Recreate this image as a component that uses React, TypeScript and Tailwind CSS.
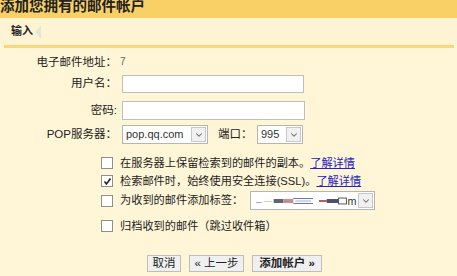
import { ChevronDown } from "lucide-react"

const font = { fontFamily: '"Liberation Sans", "Noto Sans CJK SC", sans-serif' }

function Select(props: any) {
  return (
    <div className={"flex items-center h-[19px] bg-white border border-[#b5b5b5] " + props.className}>
      <div className="flex-1 pl-[3px] text-[11px] text-[#333] leading-none">{props.children}</div>
      <div className="w-[15px] h-[15px] mr-[1px] border border-[#c8c8c8] bg-[#f1f1f1] flex items-center justify-center">
        <ChevronDown size={10} strokeWidth={2.5} className="text-[#666]" />
      </div>
    </div>
  )
}

function Check(props: any) {
  return (
    <div className="flex items-center h-[18px]">
      <div className="w-[12px] h-[12px] border border-[#8f8f8f] bg-white flex items-center justify-center mr-[7px]">
        {props.checked && (
          <svg width="9" height="9" viewBox="0 0 9 9">
            <path d="M1.5 4.5 L3.5 7 L7.5 1.5" stroke="#222" strokeWidth="1.6" fill="none" />
          </svg>
        )}
      </div>
      <span className="text-[11.2px] text-[#222]">{props.children}</span>
    </div>
  )
}

function Btn(props: any) {
  return (
    <div className={"h-[17px] flex items-center justify-center border border-[#bdbdbd] bg-[#f0f0f0] text-[11.5px] text-[#222] " + props.className}>
      {props.children}
    </div>
  )
}

export default function App() {
  return (
    <div style={font} className="w-[457px] h-[276px] bg-[#fff6d8] overflow-hidden">
      <div className="h-[18px] bg-[#f9d066] overflow-hidden">
        <p className="text-[14.5px] font-bold text-[#222] leading-[14px] -mt-[1px]">添加您拥有的邮件帐户</p>
      </div>
      <div className="h-[27px] bg-[#fef4d4] flex items-center pl-[11px]">
        <span className="text-[11px] font-bold text-[#222]">输入</span>
        <svg width="6" height="14" viewBox="0 0 6 14" className="ml-[2px]">
          <path d="M6 0 L0 7 L6 14 Z" fill="#e9e5d6" />
        </svg>
      </div>
      <div className="h-[3px] ml-[4px] mr-[3px] bg-[#fbd57c]" />

      <div className="grid grid-cols-[117px_1fr] gap-x-[5px] items-center mt-[5px] text-[11.5px] text-[#222]">
        <div className="text-right h-[18px] leading-[18px]">电子邮件地址：</div>
        <div className="text-[10px] text-[#666] h-[18px] leading-[18px] -ml-[2px]">7</div>

        <div className="text-right mt-[4px]">用户名：</div>
        <div className="w-[182px] h-[18px] bg-white border border-[#bfbfbf] mt-[4px]" />

        <div className="text-right mt-[8px]">密码:</div>
        <div className="w-[183px] h-[19px] bg-white border border-[#bfbfbf] mt-[8px]" />

        <div className="text-right mt-[5px]">POP服务器：</div>
        <div className="flex items-center mt-[5px]">
          <Select className="w-[86px]">pop.qq.com</Select>
          <span className="ml-[10px] w-[39px]">端口：</span>
          <Select className="w-[46px]">995</Select>
        </div>
      </div>

      <div className="ml-[101px] mt-[10px] flex flex-col">
        <Check>
          在服务器上保留检索到的邮件的副本。<span className="text-[#2323c8] underline">了解详情</span>
        </Check>
        <Check checked>
          检索邮件时，始终使用安全连接(SSL)。<span className="text-[#2323c8] underline">了解详情</span>
        </Check>
        <div className="flex items-center h-[21px]">
          <Check>为收到的邮件添加标签：</Check>
          <div className="ml-[7px] flex items-center h-[19px] w-[125px] bg-white border border-[#b5b5b5]">
            <svg width="106" height="10" viewBox="0 0 106 10" className="ml-[3px]">
              <rect x="2" y="6" width="6" height="1" fill="#8fb2d8" />
              <rect x="10" y="5" width="8" height="1" fill="#f0c89a" />
              <rect x="20" y="3" width="10" height="4" fill="#5a6478" />
              <rect x="30" y="3" width="10" height="4" fill="#c88a8a" />
              <rect x="40" y="2" width="20" height="1" fill="#6a70a0" />
              <rect x="40" y="7" width="20" height="1" fill="#6a70a0" />
              <rect x="42" y="4" width="16" height="2" fill="#c8d8f0" />
              <rect x="66" y="4" width="8" height="2" fill="#b06060" />
              <rect x="74" y="3" width="12" height="4" fill="#4a5070" />
              <rect x="86" y="2" width="8" height="6" fill="none" stroke="#555" strokeWidth="1" />
              <text x="95" y="9" fontSize="11" fill="#333" fontFamily="Liberation Sans">m</text>
            </svg>
            <div className="ml-auto w-[15px] h-[15px] mr-[1px] border border-[#c8c8c8] bg-[#f1f1f1] flex items-center justify-center">
              <ChevronDown size={10} strokeWidth={2.5} className="text-[#666]" />
            </div>
          </div>
        </div>
        <div className="mt-[6px]">
          <Check>归档收到的邮件（跳过收件箱）</Check>
        </div>
      </div>

      <div className="flex ml-[147px] mt-[20px] gap-[8px]">
        <Btn className="w-[34px]">取消</Btn>
        <Btn className="w-[55px]">« 上一步</Btn>
        <Btn className="w-[70px] font-bold">添加帐户 »</Btn>
      </div>
    </div>
  )
}
